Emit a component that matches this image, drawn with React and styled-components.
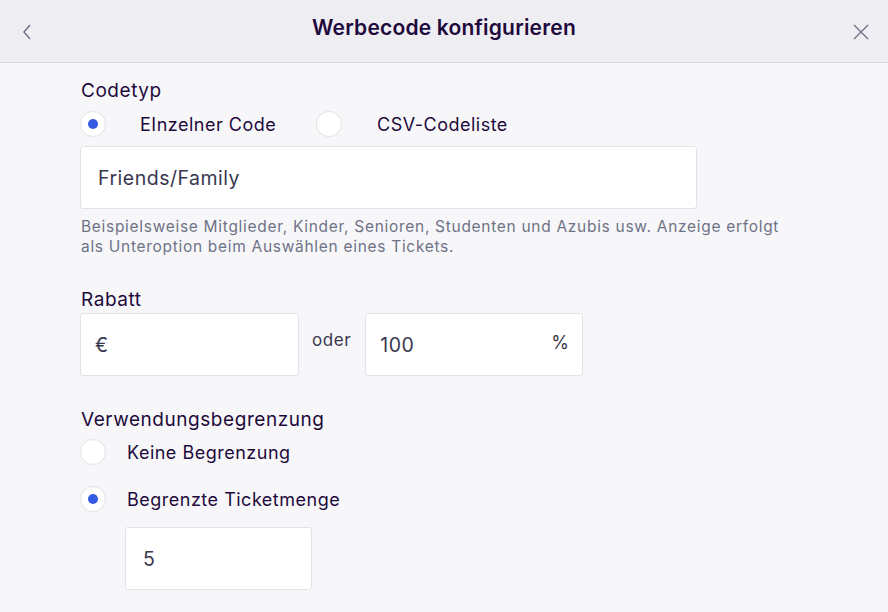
import React from "react";
import styled, { createGlobalStyle } from "styled-components";

const Global = createGlobalStyle`
  html, body { margin: 0; padding: 0; background: #f7f7f9; }
  body { font-family: Inter, "Noto Sans", sans-serif; color: #1e0a3c; }
  * { box-sizing: border-box; }
`;

const Page = styled.div`
  width: 888px;
  height: 612px;
  background: #f7f7f9;
  overflow: hidden;
`;

const Header = styled.header`
  height: 63px;
  background: #eeedf2;
  border-bottom: 1px solid #d8d7dd;
  display: grid;
  grid-template-columns: 54px 1fr 54px;
  align-items: center;
`;

const Title = styled.h1`
  margin: 0 0 8px;
  text-align: center;
  font-size: 21px;
  font-weight: 600;
  letter-spacing: 0.2px;
  color: #1e0a3c;
`;

const IconBtn = styled.button`
  border: 0;
  background: none;
  padding: 0;
  display: flex;
  justify-content: center;
  align-items: center;
  height: 100%;
  color: #6f7287;
  margin-top: ${p => p.$mt || 0}px;
`;

const Content = styled.main`
  padding: 15px 0 0 80px;
  display: flex;
  flex-direction: column;
`;

const SectionTitle = styled.div`
  font-size: 19px;
  line-height: 24px;
  letter-spacing: 0.55px;
  color: #1e0a3c;
  margin-top: ${p => p.$mt || 0}px;
  padding-left: 1px;
`;

const RadioRow = styled.div`
  display: flex;
  align-items: center;
  margin-top: ${p => p.$mt || 0}px;
`;

const RadioOption = styled.label`
  display: flex;
  align-items: center;
  gap: ${p => p.$gap}px;
  width: ${p => (p.$w ? p.$w + "px" : "auto")};
  font-size: 18px;
  letter-spacing: 0.5px;
  color: #1e0a3c;
`;

const RadioCircle = styled.span`
  width: 26px;
  height: 26px;
  border-radius: 50%;
  background: #fff;
  border: 1px solid #e6e5ea;
  box-shadow: 0 0 1px rgba(0, 0, 0, 0.05);
  display: flex;
  align-items: center;
  justify-content: center;
  flex-shrink: 0;
  &::after {
    content: "";
    width: 10px;
    height: 10px;
    border-radius: 50%;
    background: #3659e3;
    display: ${p => (p.$checked ? "block" : "none")};
  }
`;

const InputBox = styled.div`
  width: ${p => p.$w}px;
  height: 63px;
  background: #fff;
  border: 1px solid #e3e2e8;
  border-radius: 3px;
  display: flex;
  align-items: center;
  justify-content: space-between;
  padding: 0 ${p => p.$pr || 12}px 0 ${p => p.$pl || 14}px;
  font-size: 19.5px;
  letter-spacing: 0.5px;
  color: #39364f;
  margin-top: ${p => p.$mt || 0}px;
  margin-left: ${p => p.$ml || 0}px;
`;

const Suffix = styled.span`
  font-size: 18px;
  color: #39364f;
  margin-top: -4px;
`;

const Help = styled.p`
  margin: 8px 0 0 1px;
  font-size: 15.5px;
  line-height: 20px;
  letter-spacing: 0.7px;
  color: #6f7287;
  width: 712px;
`;

const DiscountRow = styled.div`
  display: flex;
  align-items: center;
  margin-top: 1px;
`;

const Or = styled.span`
  font-size: 17px;
  letter-spacing: 0.6px;
  color: #39364f;
  padding: 0 14px 0 13px;
  margin-top: -10px;
`;

export default function App() {
  return (
    <Page>
      <Global />
      <Header>
        <IconBtn aria-label="Zurück" $mt={2}>
          <svg width="12" height="16" viewBox="0 0 12 16">
            <path d="M9 1 L3 8 L9 15" fill="none" stroke="#6f7287" strokeWidth="1.4" />
          </svg>
        </IconBtn>
        <Title>Werbecode konfigurieren</Title>
        <IconBtn aria-label="Schließen" $mt={2}>
          <svg width="16" height="16" viewBox="0 0 16 16">
            <path d="M1 1 L15 15 M15 1 L1 15" fill="none" stroke="#6f7287" strokeWidth="1.4" />
          </svg>
        </IconBtn>
      </Header>
      <Content>
        <SectionTitle $mt={1}>Codetyp</SectionTitle>
        <RadioRow $mt={8}>
          <RadioOption $gap={34} $w={236}>
            <RadioCircle $checked />
            EInzelner Code
          </RadioOption>
          <RadioOption $gap={35}>
            <RadioCircle />
            CSV-Codeliste
          </RadioOption>
        </RadioRow>
        <InputBox $w={617} $mt={9} $pl={17}>Friends/Family</InputBox>
        <Help>
          Beispielsweise Mitglieder, Kinder, Senioren, Studenten und Azubis usw. Anzeige erfolgt als Unteroption beim Auswählen eines Tickets.
        </Help>
        <SectionTitle $mt={31}>Rabatt</SectionTitle>
        <DiscountRow>
          <InputBox $w={219}>€</InputBox>
          <Or>oder</Or>
          <InputBox $w={218} $pr={13}>
            <span>100</span>
            <Suffix>%</Suffix>
          </InputBox>
        </DiscountRow>
        <SectionTitle $mt={32}>Verwendungsbegrenzung</SectionTitle>
        <RadioRow $mt={7}>
          <RadioOption $gap={21}>
            <RadioCircle />
            Keine Begrenzung
          </RadioOption>
        </RadioRow>
        <RadioRow $mt={21}>
          <RadioOption $gap={21}>
            <RadioCircle $checked />
            Begrenzte Ticketmenge
          </RadioOption>
        </RadioRow>
        <InputBox $w={187} $mt={15} $ml={45} $pl={17}>5</InputBox>
      </Content>
    </Page>
  );
}
